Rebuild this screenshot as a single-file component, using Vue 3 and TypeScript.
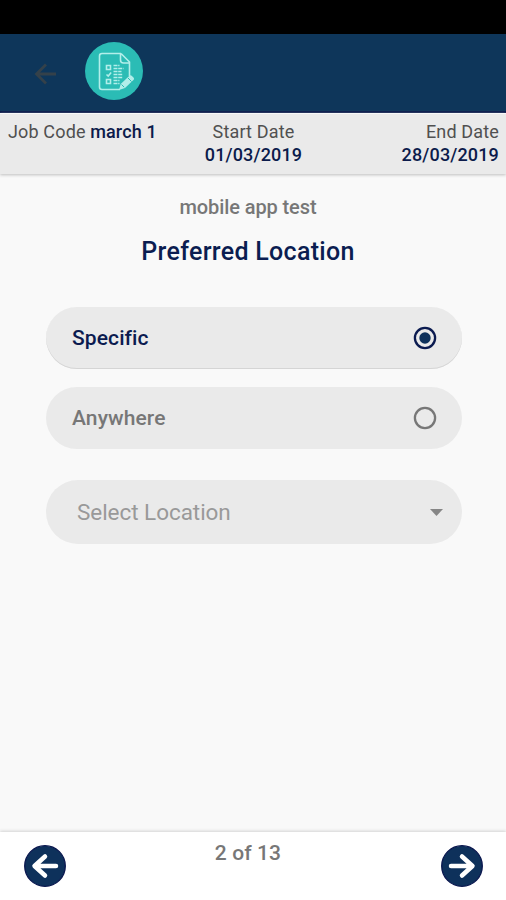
<script setup lang="ts">
import { ref } from 'vue'

const options: string[] = ['Specific', 'Anywhere']
const selected = ref<string>('Specific')
const step = ref<number>(2)
const total = 13

function move(delta: number): void {
  step.value = Math.min(total, Math.max(1, step.value + delta))
}
</script>

<template>
  <div class="screen">
    <div class="status"></div>
    <header class="bar">
      <svg class="back" viewBox="0 0 24 24" width="24" height="24">
        <path d="M22 12H3M12 2.5L2.5 12l9.5 9.5" />
      </svg>
      <svg class="logo" viewBox="0 0 58 58" width="58" height="58">
        <circle cx="29" cy="29" r="29" fill="#2bbcb5" />
        <g class="sheet">
          <path d="M36 11.500H17q-2.500 0-2.500 2.500v31q0 2.500 2.500 2.500h18M36 11.500l8.500 8.500V34M35.500 12v6q0 3 3 3h6" />
          <path d="M21.500 23.500h4v4h-4zM21.500 37.500h4v4h-4zM21.500 32.500l1.700 1.500 3-3.500" />
          <path d="M28.500 23.500h6M28.500 26.500h10M28.500 29.500h8M28.500 32.500h9M28.500 35.500h9M28.500 38.500h6M28.500 41.500h6" stroke-dasharray="4 .7" />
        </g>
        <path d="M34 48l1.700-6 9-8.500q1-.7 2 .3l2 2q.7 1 0 2L40 46z" fill="#b2eeea" />
        <path d="M36.500 42.500l2.700 2.700M43 36l3.500 3.500" stroke="#2bbcb5" stroke-width="1" />
      </svg>
    </header>

    <section class="info">
      <p class="job"><span class="label code">Job Code</span> <b class="march">march 1</b></p>
      <p class="start"><span class="label">Start Date</span><b>01/03/2019</b></p>
      <p class="end"><span class="label">End Date</span><b>28/03/2019</b></p>
    </section>

    <main>
      <div class="heading">
        <h2>mobile app test</h2>
        <h1>Preferred Location</h1>
      </div>
      <div class="options">
        <button
          v-for="option in options"
          :key="option"
          class="option"
          :class="{ active: selected === option }"
          @click="selected = option"
        >
          <span>{{ option }}</span>
          <svg class="radio" viewBox="0 0 24 24" width="24" height="24">
            <circle cx="12" cy="12" r="10.100" fill="none" stroke="currentColor" stroke-width="2.300" />
            <circle v-if="selected === option" class="dot" cx="12" cy="12" r="5.700" />
          </svg>
        </button>
      </div>
      <button class="select">
        <span>Select Location</span>
        <svg viewBox="0 0 13 7" width="13" height="7"><path d="M0 0h13L6.500 7z" fill="#868686" /></svg>
      </button>
    </main>

    <footer>
      <button class="nav" aria-label="Previous" @click="move(-1)">
        <svg viewBox="0 0 42 42" width="42" height="42">
          <circle cx="21" cy="21" r="20.300" />
          <path d="M32 21H11M21 11.500L10.500 21 21 30.500" />
        </svg>
      </button>
      <span class="count">{{ step }} of {{ total }}</span>
      <button class="nav" aria-label="Next" @click="move(1)">
        <svg viewBox="0 0 42 42" width="42" height="42">
          <circle cx="21" cy="21" r="20.300" />
          <path d="M10 21h21M21 11.500L31.500 21 21 30.500" />
        </svg>
      </button>
    </footer>
  </div>
</template>

<style>
body {
  margin: 0;
  background: #f9f9f9;
}
</style>

<style scoped>
.screen {
  width: 506px;
  height: 900px;
  display: flex;
  flex-direction: column;
  overflow: hidden;
  background: #f9f9f9;
  font-family: Roboto, sans-serif;
}
button {
  border: 0;
  padding: 0;
  font-family: inherit;
  background: none;
}
svg {
  display: block;
}
.status {
  height: 34px;
  background: #000;
}
.bar {
  height: 79px;
  box-sizing: border-box;
  padding: 8px 0 0 34px;
  display: flex;
  gap: 27px;
  background: #0e365a;
  border-bottom: 2px solid #07194a;
}
.back {
  margin-top: 20px;
  fill: none;
  stroke: #34414a;
  stroke-width: 2.8;
}
.sheet {
  fill: none;
  stroke: #b2eeea;
  stroke-width: 1.6;
}
.info {
  height: 61px;
  display: grid;
  grid-template-columns: 1fr auto 1fr;
  padding: 6px 7px 0 8px;
  box-sizing: border-box;
  background: #eaeaea;
  border-top: 1px solid #f8f8f8;
  box-shadow: 0 1px 3px #bdbdbd;
  color: #0c1b4b;
  font-size: 18px;
  line-height: 23px;
  white-space: nowrap;
}
.info p {
  margin: 0;
}
.info .label {
  color: #505050;
  letter-spacing: 0.15px;
}
.info b {
  font-weight: 500;
  letter-spacing: 0.15px;
}
.start,
.end {
  display: flex;
  flex-direction: column;
}
.start {
  align-items: center;
}
.end {
  align-items: flex-end;
}
main {
  flex: 1;
  padding: 0 44px 0 46px;
}
.heading {
  padding-right: 12px;
  text-align: center;
}
h2,
h1 {
  margin: 0;
  font-weight: 500;
}
h2 {
  padding-top: 21px;
  font-size: 20px;
  line-height: 24px;
  letter-spacing: -0.1px;
  color: #777;
}
h1 {
  margin-top: 17px;
  font-size: 25px;
  line-height: 32px;
  letter-spacing: 0.3px;
  color: #0b1d51;
}
.options {
  display: grid;
  gap: 18px;
  margin-top: 39px;
}
.option {
  height: 62px;
  padding: 0 25px 0 26px;
  display: flex;
  align-items: center;
  justify-content: space-between;
  border-radius: 31px;
  background: #eaeaea;
  color: #777;
  font-size: 21px;
  font-weight: 500;
  letter-spacing: 0.1px;
}
.option.active {
  color: #0b1b50;
  box-shadow: inset 0 -1px 0 #d5d5d5;
}
.dot {
  fill: #0e315b;
}
.select {
  width: 100%;
  height: 64px;
  margin-top: 31px;
  padding: 0 19px 0 31px;
  display: flex;
  align-items: center;
  justify-content: space-between;
  border-radius: 32px;
  background: #eaeaea;
  color: #999;
  font-size: 22.5px;
  letter-spacing: -0.05px;
}
footer {
  height: 68px;
  box-sizing: border-box;
  padding: 13px 23px 0 24px;
  display: flex;
  justify-content: space-between;
  background: #fff;
  box-shadow: 0 -1px 3px #d2d2d2;
}
.nav {
  width: 42px;
  height: 42px;
}
.nav circle {
  fill: #0e315b;
  stroke: #09164e;
  stroke-width: 1.3;
}
.nav path {
  fill: none;
  stroke: #fff;
  stroke-width: 4.5;
  stroke-linecap: round;
  stroke-linejoin: round;
}
.count {
  margin: -4px 11px 0 0;
  line-height: 24px;
  font-size: 21px;
  font-weight: 500;
  letter-spacing: 0.1px;
  color: #777;
}
</style>
